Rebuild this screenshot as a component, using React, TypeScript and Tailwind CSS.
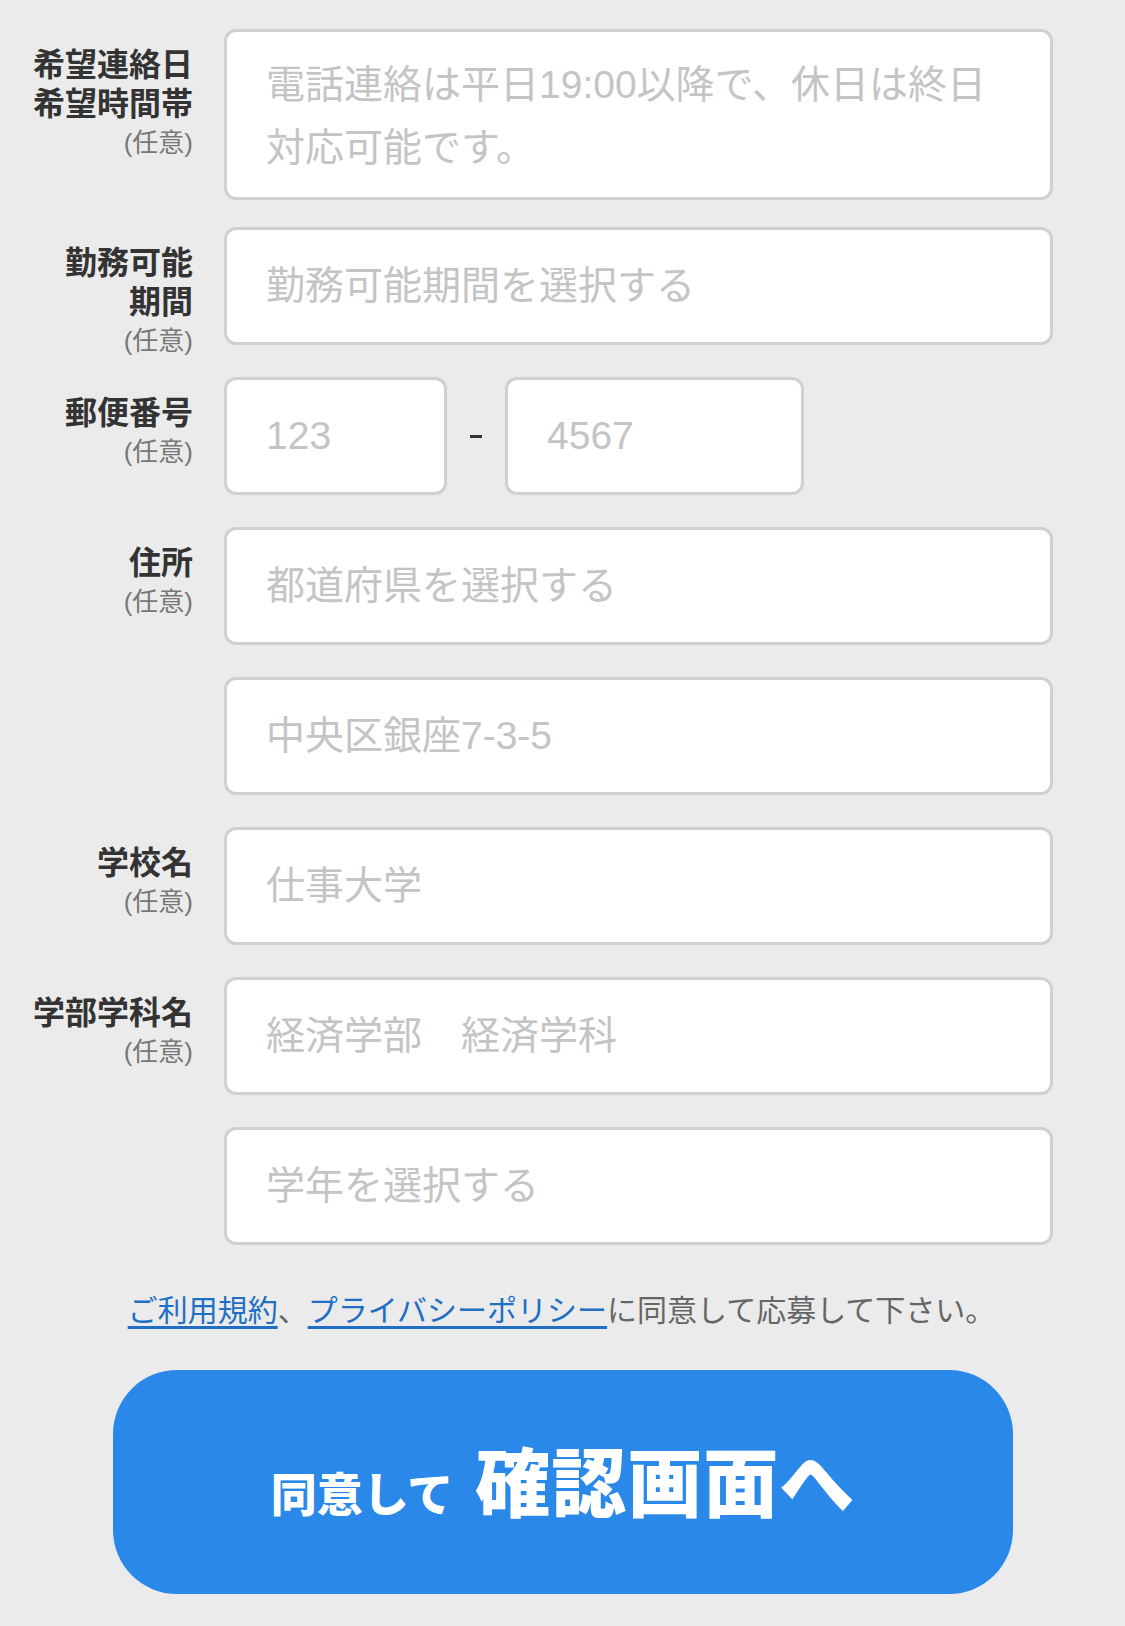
import type { ReactNode } from 'react';

const font = {
  fontFamily: '"Liberation Sans", "Noto Sans CJK JP", sans-serif',
};

const boxClass =
  'block w-full h-[118px] bg-white border-[3px] border-[#d0d0d0] rounded-[12px] pl-[39px] pr-[20px] text-[39px] text-[#333] placeholder:text-[#c4c4c4] outline-none';

function Label({ lines, optional = true }: { lines: string[]; optional?: boolean }) {
  return (
    <div className="w-[193px] flex-shrink-0 text-right pt-[17px] -mb-[60px]">
      {lines.map((l) => (
        <div key={l} className="text-[32px] leading-[39px] font-bold text-[#333]">
          {l}
        </div>
      ))}
      {optional && (
        <div className="text-[26px] leading-[39px] text-[#777]">(任意)</div>
      )}
    </div>
  );
}

function Row({ label, children, first }: { label?: ReactNode; children: ReactNode; first?: boolean }) {
  return (
    <div className={`flex items-start gap-[31px] ${first ? '' : 'mt-[32px]'}`}>
      {label ?? <div className="w-[193px] flex-shrink-0" />}
      <div className="w-[829px]">{children}</div>
    </div>
  );
}

export default function App() {
  return (
    <div className="min-h-screen h-[1626px] bg-[#ebebeb]" style={font}>
      <div className="pt-[29px]">
        <Row first label={<Label lines={['希望連絡日', '希望時間帯']} />}>
          <textarea
            className="block w-full h-[171px] resize-none bg-white border-[3px] border-[#d0d0d0] rounded-[12px] pl-[39px] pr-[10px] pt-[21px] text-[39px] leading-[63px] text-[#333] placeholder:text-[#c4c4c4] outline-none"
            placeholder={'電話連絡は平日19:00以降で、休日は終日\n対応可能です。'}
          />
        </Row>
        <div className="-mt-[5px]" />
        <Row label={<Label lines={['勤務可能', '期間']} />}>
          <input className={boxClass} placeholder="勤務可能期間を選択する" />
        </Row>
        <Row label={<Label lines={['郵便番号']} />}>
          <div className="flex items-center">
            <input className={`${boxClass} !w-[223px]`} placeholder="123" />
            <div className="w-[58px] flex justify-center">
              <div className="w-[12px] h-[3px] bg-[#333]" />
            </div>
            <input className={`${boxClass} !w-[299px]`} placeholder="4567" />
          </div>
        </Row>
        <Row label={<Label lines={['住所']} />}>
          <input className={boxClass} placeholder="都道府県を選択する" />
        </Row>
        <Row>
          <input className={boxClass} placeholder="中央区銀座7-3-5" />
        </Row>
        <Row label={<Label lines={['学校名']} />}>
          <input className={boxClass} placeholder="仕事大学" />
        </Row>
        <Row label={<Label lines={['学部学科名']} />}>
          <input className={boxClass} placeholder="経済学部　経済学科" />
        </Row>
        <Row>
          <input className={boxClass} placeholder="学年を選択する" />
        </Row>

        <p className="mt-[46px] text-center text-[30px] leading-[40px] text-[#666] pr-[2px]">
          <a href="#" className="text-[#1f6fc5] underline underline-offset-[5px]">
            ご利用規約
          </a>
          、
          <a href="#" className="text-[#1f6fc5] underline underline-offset-[5px]">
            プライバシーポリシー
          </a>
          に同意して応募して下さい。
        </p>

        <div className="mt-[39px] flex justify-center">
          <button className="w-[900px] h-[224px] ml-[1px] rounded-[64px] bg-[#2a88e8] flex items-center justify-center text-white font-black">
            <span className="flex items-baseline gap-[22px] pt-[6px]">
              <span className="text-[46px]">同意して</span>
              <span className="text-[75px] tracking-[1px]">確認画面へ</span>
            </span>
          </button>
        </div>
      </div>
    </div>
  );
}
